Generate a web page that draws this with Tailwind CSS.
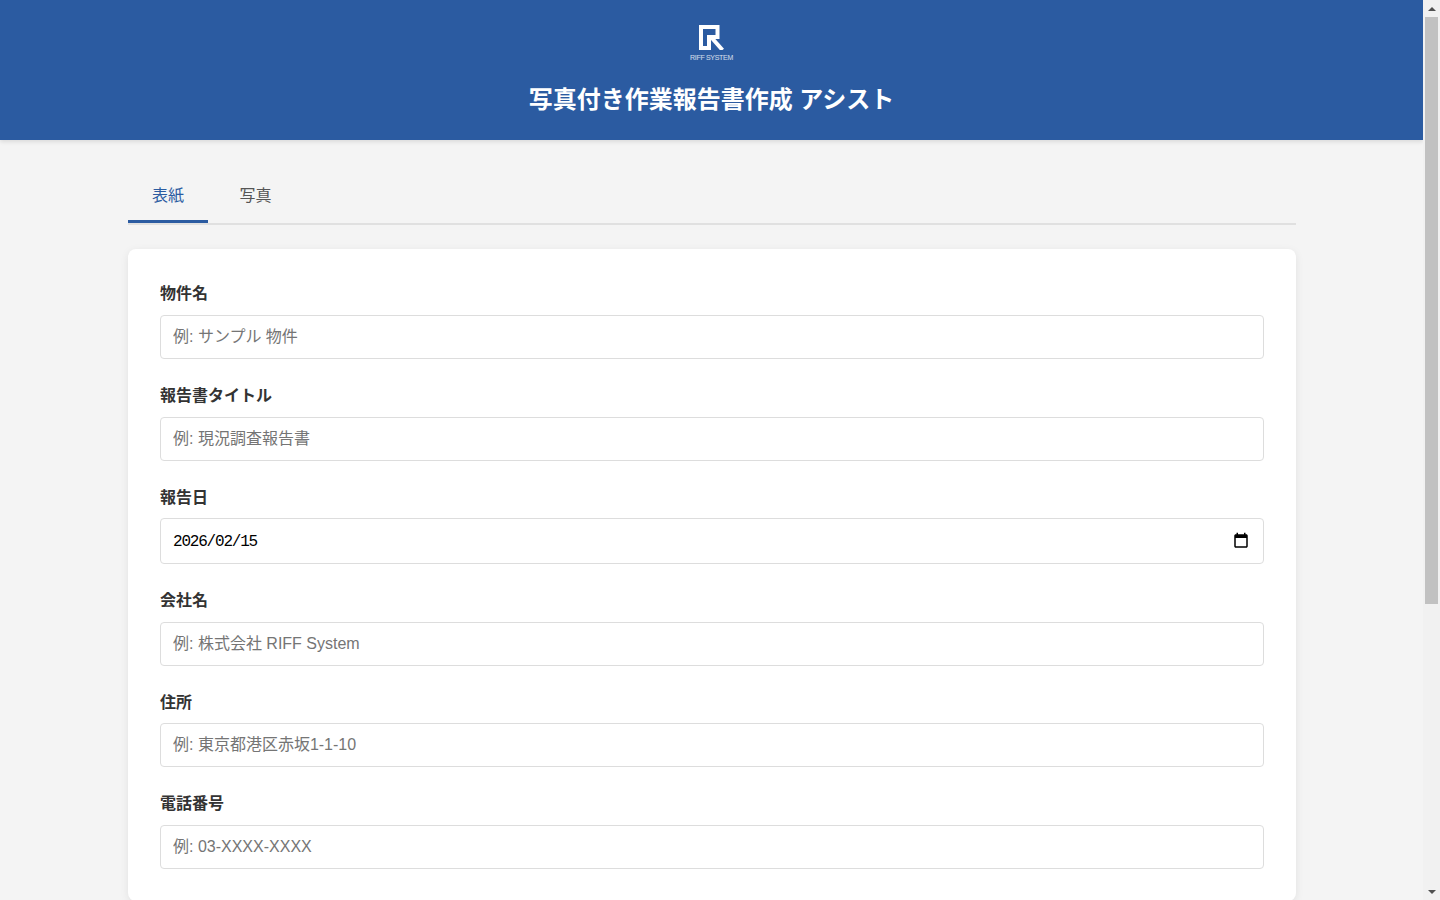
<!DOCTYPE html>
<html lang="ja">

<head>
  <meta charset="UTF-8" />
  <meta name="viewport" content="width=device-width, initial-scale=1.0" />
  <title>写真付き作業報告書作成 アシスト</title>
  <script src="https://cdn.jsdelivr.net/npm/@tailwindcss/browser@4"></script>
</head>

<body class="h-screen overflow-hidden flex bg-[#f4f4f4] text-[#333333] font-['Liberation_Sans','Noto_Sans_CJK_JP',sans-serif]">
  <!-- Page -->
  <div class="w-[1423px] h-[900px] overflow-hidden flex-shrink-0">
    <!-- Header -->
    <header class="relative h-[140px] bg-[#2b5ba1] shadow-[0_2px_4px_rgba(0,0,0,0.1)] flex flex-col items-center pt-[25px] text-white">
      <svg class="w-[26px] h-[25px] ml-[1px]" viewBox="0 0 26 25" fill="none" stroke="#ffffff" stroke-width="4">
        <path d="M10 23H2V2H18.500V12H10V25" />
        <path d="M12 12L23.500 25" />
      </svg>
      <div class="mt-[3px] text-[7px] leading-[9px] tracking-[-0.3px] font-light text-white/80">RIFF SYSTEM</div>
      <h1 class="mt-[20px] text-2xl leading-[36px] font-bold">写真付き作業報告書作成 アシスト</h1>
    </header>

    <main class="w-[1168px] ml-[128px] pt-[27px]">
      <!-- Tabs -->
      <div class="flex h-[58px] border-b-2 border-[#e0e0e0]">
        <div class="w-[80px] h-[56px] pt-[3px] leading-[52px] text-center text-[#2b5ba1] border-b-[3px] border-[#2b5ba1]">表紙</div>
        <div class="w-[95px] h-[56px] pt-[3px] leading-[52px] text-center text-[#555555]">写真</div>
      </div>

      <!-- Cover form -->
      <section class="mt-[24px] bg-white rounded-lg shadow-[0_2px_8px_rgba(0,0,0,0.08)] px-8 pt-8 pb-8 flex flex-col">
        <div class="h-[102px]">
          <label class="block h-[34px] pt-[2px] leading-[22px] font-bold">物件名</label>
          <input type="text" placeholder="例: サンプル 物件" class="w-full h-[44px] px-3 border border-[#dddddd] rounded placeholder:text-[#757575]" />
        </div>
        <div class="h-[101px]">
          <label class="block h-[34px] pt-[2px] leading-[22px] font-bold">報告書タイトル</label>
          <input type="text" placeholder="例: 現況調査報告書" class="w-full h-[44px] px-3 border border-[#dddddd] rounded placeholder:text-[#757575]" />
        </div>
        <div class="h-[104px]">
          <label class="block h-[34px] pt-[3px] leading-[22px] font-bold">報告日</label>
          <div class="relative">
            <input type="text" value="2026/02/15" class="w-full h-[46px] px-3 pt-[2px] border border-[#dddddd] rounded text-black font-['Liberation_Mono',monospace] tracking-[-1.2px]" />
            <svg class="absolute right-[14px] top-[14px] w-[18px] h-[18px]" viewBox="0 0 24 24" fill="#000000">
              <path d="M19 3h-1V1h-2v2H8V1H6v2H5c-1.110 0-2 .9-2 2v14c0 1.100.89 2 2 2h14c1.100 0 2-.9 2-2V5c0-1.100-.9-2-2-2zm0 16H5V8h14v11z" />
            </svg>
          </div>
        </div>
        <div class="h-[101px]">
          <label class="block h-[34px] pt-[2px] leading-[22px] font-bold">会社名</label>
          <input type="text" placeholder="例: 株式会社 RIFF System" class="w-full h-[44px] px-3 border border-[#dddddd] rounded placeholder:text-[#757575]" />
        </div>
        <div class="h-[102px]">
          <label class="block h-[34px] pt-[3px] leading-[22px] font-bold">住所</label>
          <input type="text" placeholder="例: 東京都港区赤坂1-1-10" class="w-full h-[44px] px-3 border border-[#dddddd] rounded placeholder:text-[#757575]" />
        </div>
        <div>
          <label class="block h-[34px] pt-[2px] leading-[22px] font-bold">電話番号</label>
          <input type="text" placeholder="例: 03-XXXX-XXXX" class="w-full h-[44px] px-3 border border-[#dddddd] rounded placeholder:text-[#757575]" />
        </div>
      </section>
    </main>
  </div>

  <!-- Scrollbar -->
  <div class="w-[17px] h-[900px] bg-[#f1f1f1] flex flex-col items-center flex-shrink-0">
    <div class="h-[17px] flex items-center justify-center">
      <div class="w-0 h-0 border-x-[4px] border-x-transparent border-b-[4px] border-b-[#505050]"></div>
    </div>
    <div class="w-[13px] h-[587px] bg-[#c1c1c1]"></div>
    <div class="flex-1"></div>
    <div class="h-[17px] flex items-center justify-center">
      <div class="w-0 h-0 border-x-[4px] border-x-transparent border-t-[4px] border-t-[#505050]"></div>
    </div>
  </div>
</body>

</html>
